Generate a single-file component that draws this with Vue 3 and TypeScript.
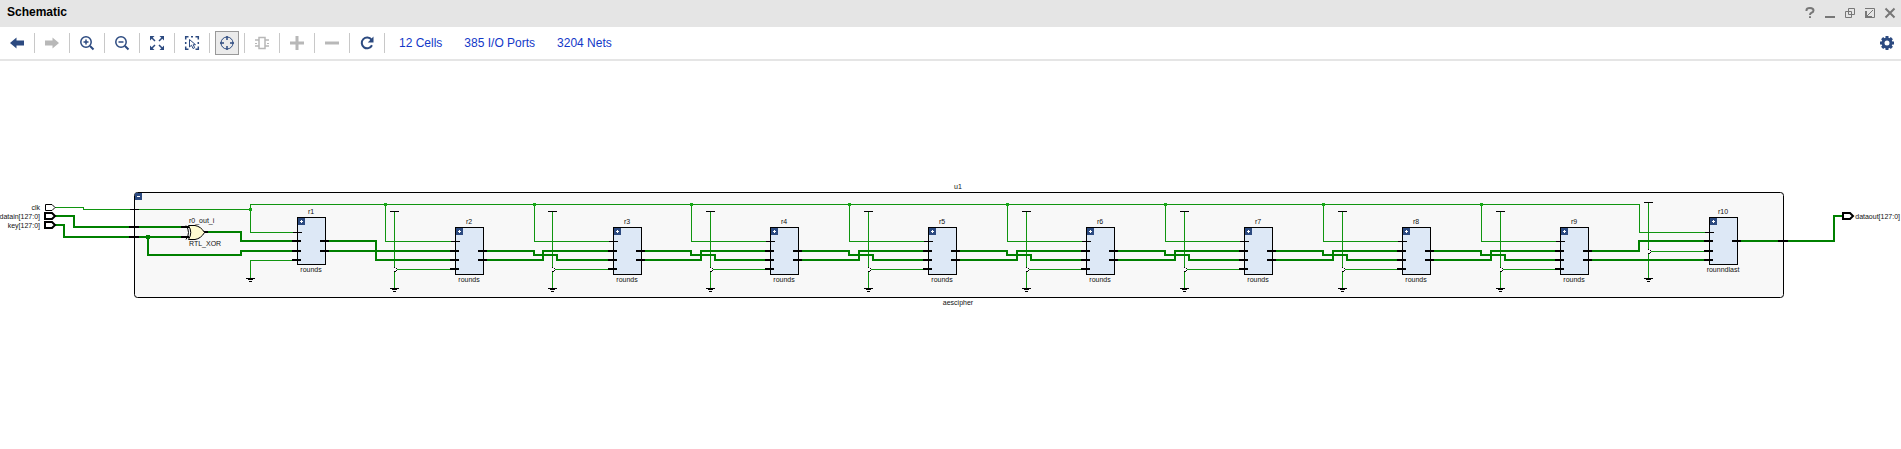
<script setup lang="ts">
import { ref } from 'vue'

type Tool = { id: string; label: string; disabled?: boolean }
type Cell = { name: string; kind: string; x: number; y: number; outs: number[] }

const tools: Tool[] = [
  { id: 'back', label: 'Previous view' },
  { id: 'forward', label: 'Next view', disabled: true },
  { id: 'zoomIn', label: 'Zoom in' },
  { id: 'zoomOut', label: 'Zoom out' },
  { id: 'fit', label: 'Zoom fit' },
  { id: 'area', label: 'Select area' },
  { id: 'target', label: 'Auto fit selection' },
  { id: 'cell', label: 'Expand cell', disabled: true },
  { id: 'add', label: 'Add to schematic', disabled: true },
  { id: 'remove', label: 'Remove from schematic', disabled: true },
  { id: 'refresh', label: 'Regenerate' },
]
const autoFit = ref(true)
function press(id: string) {
  if (id === 'target') autoFit.value = !autoFit.value
}

const stats = ['12 Cells', '385 I/O Ports', '3204 Nets']

const roundLefts = [455, 613, 770, 928, 1086, 1244, 1402, 1560]
const supplyXs = [394, 552, 710, 868, 1026, 1184, 1342, 1500]
const clockTaps = [385, 534, 691, 849, 1007, 1165, 1323, 1481]
const lastLeft = 1709

const cells: Cell[] = [
  { name: 'r1', kind: 'rounds', x: 297, y: 37, outs: [24, 34] },
  ...roundLefts.map((x, i) => ({ name: `r${i + 2}`, kind: 'rounds', x, y: 47, outs: [24, 33] })),
  { name: 'r10', kind: 'rounndlast', x: lastLeft, y: 37, outs: [24] },
]
function pinRows(c: Cell): number[] {
  return c.y === 37 ? [24, 34, 43] : [24, 33, 42]
}

const supplies = [
  ...roundLefts.map((x, i) => ({ x: supplyXs[i], top: 31, bottom: 108, tap: 89, end: x })),
  { x: 1648, top: 22, bottom: 98, tap: 71, end: lastLeft },
]
const grounds = [{ x: 250, y: 98 }, ...supplies.map((s) => ({ x: s.x, y: s.bottom }))]

const thinNets: string[] = [
  'M55 27.5H83.5V29.5H250.5',
  'M297 52.5H250.5V24.5H1639.5V52.5H1709',
  'M250.5 98V80.5H297',
  ...roundLefts.map((x, i) => `M${clockTaps[i] + 0.5} 24.5V61.5H${x}`),
  ...supplies.map((s) => `M${s.x + 0.5} ${s.top}V${s.bottom}`),
  ...supplies.map((s) => `M${s.x + 3} ${s.tap + 0.5}H${s.end}`),
]

function crossing(i: number): string[] {
  const from = roundLefts[i - 1] + 29
  const to = roundLefts[i]
  const mid = supplyXs[i]
  return [
    `M${from} 71H${clockTaps[i]}V75H${mid + 5}V80H${to}`,
    `M${from} 80H${mid - 9}V71H${to}`,
  ]
}

const busNets: string[] = [
  'M55 36H74V47H184',
  'M55 45H64V57H184',
  'M148 57V75H241V71H297',
  'M206 52H241V61H297',
  'M326 61H376V80H455',
  'M326 71H455',
  ...roundLefts.slice(1).flatMap((_, i) => crossing(i + 1)),
  'M1589 71H1639V61H1709',
  'M1589 80H1709',
  'M1738 61H1834V36H1843',
]
</script>

<template>
  <div class="window">
    <header class="titlebar">
      <h1>Schematic</h1>
      <div class="controls">
        <button type="button" aria-label="Help">
          <svg width="14" height="14" viewBox="0 0 14 14"><path d="M3.5 5V4Q3.5 2 7 2T10.5 4.5Q10.5 6 8.5 6.7Q7 7.2 7 9M7 10.2V12" /></svg>
        </button>
        <button type="button" aria-label="Minimize">
          <svg width="14" height="14" viewBox="0 0 14 14"><path d="M2 11H12" /></svg>
        </button>
        <button type="button" aria-label="Restore">
          <svg width="14" height="14" viewBox="0 0 14 14"><path class="fine" d="M5.5 8.5V2.5H11.5V8.5ZM8.5 5.5H2.5V11.5H8.5V5.5" /></svg>
        </button>
        <button type="button" aria-label="Float">
          <svg width="14" height="14" viewBox="0 0 14 14"><path class="fine" d="M2 2.5H11.5V11.5H9M10 4L4 10" /><path d="M3 5V11H9" /></svg>
        </button>
        <button type="button" aria-label="Close">
          <svg width="14" height="14" viewBox="0 0 14 14"><path d="M2.5 2.5L11.5 11.5M11.5 2.5L2.5 11.5" /></svg>
        </button>
      </div>
    </header>

    <nav class="toolbar" aria-label="Schematic tools">
      <div v-for="t in tools" :key="t.id" class="slot">
        <button
          type="button"
          class="tool"
          :class="{ pressed: t.id === 'target' && autoFit }"
          :aria-label="t.label"
          :disabled="t.disabled"
          @click="press(t.id)"
        >
          <svg width="16" height="16" viewBox="0 0 16 16">
            <path v-if="t.id === 'back'" class="solid" d="M1 8L7.5 2.5V5.5H15V10.5H7.5V13.5Z" />
            <path v-else-if="t.id === 'forward'" class="solid" d="M15 8L8.5 2.5V5.5H1V10.5H8.5V13.5Z" />
            <g v-else-if="t.id === 'zoomIn' || t.id === 'zoomOut'">
              <circle cx="7" cy="7" r="5.2" />
              <path class="heavy" d="M11 11L14.5 14.5" />
              <path d="M4.5 7H9.5" />
              <path v-if="t.id === 'zoomIn'" d="M7 4.5V9.5" />
            </g>
            <g v-else-if="t.id === 'fit'">
              <path class="solid" d="M1 1H5.5L1 5.5ZM15 1V5.5L10.5 1ZM1 15V10.5L5.5 15ZM15 15H10.5L15 10.5Z" />
              <path d="M3 3L6 6M13 3L10 6M3 13L6 10M13 13L10 10" />
            </g>
            <g v-else-if="t.id === 'area'">
              <path d="M1.7 4.5V1.7H4.5M11.5 1.7H14.3V4.5M14.3 11.5V14.3H11.5M4.5 14.3H1.7V11.5M7 1.7H9M1.7 7V9M14.3 7V9" />
              <path class="fine" d="M5.5 4.5V12L7.5 10.2L9 13.5L10.7 12.7L9.2 9.7H11.5Z" />
            </g>
            <g v-else-if="t.id === 'target'">
              <circle class="fine" cx="8" cy="8" r="6" />
              <path d="M8 1V5M8 11V15M1 8H5M11 8H15" />
            </g>
            <g v-else-if="t.id === 'cell'">
              <path d="M5 2.5H11V13.5H5ZM1 5H5M1 11H5M11 5H15M11 11H15" />
              <path class="fine" d="M1 8.5H3M13 8.5H15" />
            </g>
            <path v-else-if="t.id === 'add'" class="bar" d="M8 1V15M1 8H15" />
            <path v-else-if="t.id === 'remove'" class="bar" d="M1 8H15" />
            <g v-else>
              <path class="heavy" d="M12.5 4.7A5.4 5.4 0 1 0 13 10.3" />
              <path class="solid" d="M14.5 1.5V7.5H8.8Z" />
            </g>
          </svg>
        </button>
      </div>
      <div class="stats">
        <a v-for="s in stats" :key="s" href="#">{{ s }}</a>
      </div>
      <button type="button" class="tool settings" aria-label="Settings">
        <svg width="16" height="16" viewBox="0 0 16 16">
          <circle class="gear" cx="8" cy="8" r="4" />
          <path class="teeth" d="M8 1V3.5M8 12.5V15M1 8H3.5M12.5 8H15M3.1 3.1L4.9 4.9M11.1 11.1L12.9 12.9M12.9 3.1L11.1 4.9M4.9 11.1L3.1 12.9" />
        </svg>
      </button>
    </nav>

    <main class="canvas">
      <svg class="drawing" viewBox="0 0 1901 130" role="img" aria-label="Schematic of aescipher">
        <rect class="module" x="134.5" y="12.5" width="1649" height="105" rx="3" />
        <rect class="badge" x="135" y="13" width="7" height="7" />
        <path class="sign" d="M137 16.5H140" />

        <path v-for="d in thinNets" :key="d" class="thin" :d="d" />
        <path v-for="d in busNets" :key="d" class="bus" :d="d" />
        <rect class="joint" x="249" y="28" width="3" height="3" />
        <rect v-for="x in clockTaps" :key="x" class="joint" :x="x - 1" y="23" width="3" height="3" />
        <rect class="joint dark" x="146" y="55" width="4" height="4" />

        <path class="pin" d="M130 29.5H139" />
        <path class="pin wide" d="M129 47H139M129 57H139M1778 61H1788M181 47H189M181 57H189M204 52H208" />

        <g v-for="s in supplies" :key="s.x">
          <path class="pin" :d="`M${s.x - 4} ${s.top + 0.5}H${s.x + 5}`" />
          <rect class="gap" :x="s.x" :y="s.tap - 1" width="1" height="3" />
          <path class="hop" :d="`M${s.x + 0.5} ${s.tap - 2}L${s.x + 3} ${s.tap + 0.5}L${s.x + 0.5} ${s.tap + 3}`" />
        </g>
        <path
          v-for="g in grounds"
          :key="g.x"
          class="pin"
          :d="`M${g.x - 4} ${g.y + 0.5}H${g.x + 5}M${g.x - 2} ${g.y + 1.5}H${g.x + 3}M${g.x - 1} ${g.y + 3.5}H${g.x + 2}`"
        />

        <g class="gate">
          <path class="back" d="M186 45.5Q191 52.5 186 59.5" />
          <path d="M188.5 45.5H195Q201 46.5 204.5 52.5Q201 58.5 195 59.5H188.5Q193 52.5 188.5 45.5Z" />
        </g>
        <text x="189" y="43">r0_out_i</text>
        <text x="189" y="66">RTL_XOR</text>

        <g v-for="c in cells" :key="c.name">
          <rect class="cell" :x="c.x + 0.5" :y="c.y + 0.5" width="28" height="47" />
          <rect class="badge" :x="c.x + 1" :y="c.y + 1" width="7" height="7" />
          <path class="sign" :d="`M${c.x + 3} ${c.y + 4.5}H${c.x + 6}M${c.x + 4.5} ${c.y + 3}V${c.y + 6}`" />
          <path class="pin" :d="`M${c.x - 4} ${c.y + (c.y === 37 ? 15.5 : 14.5)}H${c.x + 5}`" />
          <path v-for="p in pinRows(c)" :key="p" class="pin wide" :d="`M${c.x - 5} ${c.y + p}H${c.x + 4}`" />
          <path v-for="p in c.outs" :key="p" class="pin wide" :d="`M${c.x + 23} ${c.y + p}H${c.x + 32}`" />
          <text class="mid" :x="c.x + 14" :y="c.y - 3">{{ c.name }}</text>
          <text class="mid" :x="c.x + 14" :y="c.y + 55">{{ c.kind }}</text>
        </g>

        <path class="port light" d="M45.5 24.5H52L55 27.5L52 30.5H45.5Z" />
        <path class="port" d="M45 33H52L55 36L52 39H45Z" />
        <path class="port" d="M45 42H52L55 45L52 48H45Z" />
        <path class="port" d="M1843 33H1850L1853 36L1850 39H1843Z" />
        <text class="end" x="40" y="30">clk</text>
        <text class="end" x="40" y="39">datain[127:0]</text>
        <text class="end" x="40" y="48">key[127:0]</text>
        <text class="end" x="1900" y="39">dataout[127:0]</text>
        <text class="mid" x="958" y="9">u1</text>
        <text class="mid" x="958" y="125">aescipher</text>
      </svg>
    </main>
  </div>
</template>

<style>
body {
  margin: 0;
  background: #fff;
}
</style>

<style scoped>
.window {
  min-height: 100vh;
  background: #fff;
  font: 12px "Liberation Sans", Arial, sans-serif;
}
button {
  display: flex;
  align-items: center;
  justify-content: center;
  box-sizing: border-box;
  margin: 0;
  padding: 0;
  border: 0;
  background: none;
}
.titlebar {
  display: flex;
  align-items: flex-start;
  justify-content: space-between;
  box-sizing: border-box;
  height: 27px;
  padding: 0 1px 0 7px;
  background: #e5e5e5;
}
h1 {
  margin: 0;
  font-size: 12px;
  line-height: 25px;
  font-weight: bold;
  color: #000;
}
.controls {
  display: flex;
}
.controls button {
  width: 20px;
  height: 26px;
}
.controls path {
  fill: none;
  stroke: #777;
  stroke-width: 2;
}
.controls path.fine {
  stroke-width: 1;
}
.toolbar {
  display: flex;
  align-items: center;
  height: 32px;
  padding: 0 2px 0 5px;
  border-bottom: 2px solid #e5e5e5;
}
.slot {
  display: flex;
  align-items: center;
  gap: 5px;
  margin-right: 5px;
}
.slot::after {
  content: "";
  width: 1px;
  height: 20px;
  background: #c8c8c8;
}
.tool {
  width: 24px;
  height: 24px;
}
.tool.pressed {
  border: 1px solid #999;
  background: #ebebeb;
}
.tool path,
.tool circle {
  fill: none;
  stroke: #2c4a80;
  stroke-width: 1.5;
}
.tool:disabled path {
  stroke: #b8b8b8;
}
.tool path.solid {
  fill: #2c4a80;
  stroke: none;
}
.tool:disabled path.solid {
  fill: #b8b8b8;
  stroke: none;
}
.tool .fine {
  stroke-width: 1;
}
.tool .heavy {
  stroke-width: 2;
}
.tool .bar {
  stroke-width: 3;
}
.tool .gear,
.tool .teeth {
  stroke-width: 3;
}
.stats {
  display: flex;
  gap: 22px;
  margin-left: 9px;
}
.stats a {
  color: #1238c8;
  line-height: 18px;
  text-decoration: none;
}
.settings {
  margin-left: auto;
}
.canvas {
  padding: 119px 0;
}
.drawing {
  display: block;
  width: 100%;
  height: auto;
}
.drawing path,
.drawing rect {
  fill: none;
  shape-rendering: crispEdges;
}
.drawing .module {
  fill: #f8f8f8;
  stroke: #000;
  shape-rendering: auto;
}
.drawing .cell {
  fill: #dde8f6;
  stroke: #000;
}
.drawing .badge {
  fill: #2c4a80;
}
.drawing .sign {
  stroke: #fff;
}
.drawing .thin {
  stroke: #109510;
}
.drawing .bus {
  stroke: #008000;
  stroke-width: 2;
}
.drawing .joint {
  fill: #18a818;
}
.drawing .joint.dark {
  fill: #008000;
}
.drawing .pin {
  stroke: #000;
}
.drawing .pin.wide {
  stroke-width: 2;
}
.drawing .gap {
  fill: #f8f8f8;
}
.drawing .hop {
  stroke: #000;
  stroke-dasharray: 1 1;
}
.drawing .gate path {
  fill: #fffbd0;
  stroke: #000;
  shape-rendering: auto;
}
.drawing .gate .back {
  fill: none;
}
.drawing .port {
  fill: #fff;
  stroke: #000;
  stroke-width: 2;
  shape-rendering: auto;
}
.drawing .port.light {
  stroke-width: 1;
}
.drawing text {
  font-size: 7px;
  fill: #111;
}
.drawing .mid {
  text-anchor: middle;
}
.drawing .end {
  text-anchor: end;
}
</style>
